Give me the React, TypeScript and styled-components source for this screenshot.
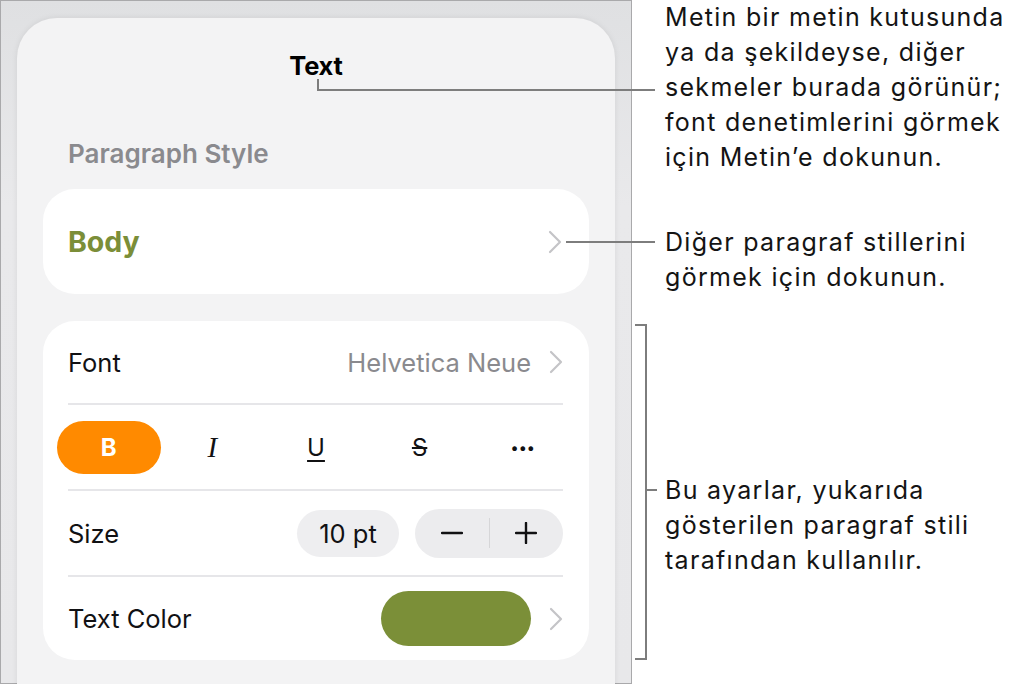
import React from 'react'
import styled, { createGlobalStyle } from 'styled-components'

const GlobalStyle = createGlobalStyle`
  html, body {
    margin: 0;
    padding: 0;
    background: #ffffff;
  }
  body {
    font-family: Inter, "Noto Sans", "Liberation Sans", sans-serif;
    -webkit-font-smoothing: antialiased;
  }
`

const color = {
  ink: '#111113',
  grey: '#8a8a8e',
  chevron: '#c4c4c7',
  line: '#e6e6e9',
  green: '#7b8e38',
  orange: '#ff8a00',
  callout: '#7d7d7d',
}

const Chevron: React.FC = () => (
  <ChevronIcon viewBox="0 0 14 24" aria-hidden>
    <polyline points="2,2 12,12 2,22" />
  </ChevronIcon>
)

const MinusIcon: React.FC = () => (
  <StepIcon viewBox="0 0 24 24" aria-hidden>
    <line x1="1" y1="12" x2="23" y2="12" />
  </StepIcon>
)

const PlusIcon: React.FC = () => (
  <StepIcon viewBox="0 0 24 24" aria-hidden>
    <line x1="1" y1="12" x2="23" y2="12" />
    <line x1="12" y1="1" x2="12" y2="23" />
  </StepIcon>
)

export default function App() {
  return (
    <Page>
      <GlobalStyle />
      <Frame>
        <Panel>
          <Title>Text</Title>
          <SectionLabel>Paragraph Style</SectionLabel>
          <StyleCard>
            <BodyName>Body</BodyName>
            <Chevron />
          </StyleCard>
          <SettingsCard>
            <Row $height={84}>
              <RowLabel>Font</RowLabel>
              <RowValue>
                <ValueText>Helvetica Neue</ValueText>
                <Chevron />
              </RowValue>
            </Row>
            <StyleButtons>
              <StyleButton $active>B</StyleButton>
              <StyleButton $variant="italic">I</StyleButton>
              <StyleButton $variant="underline">U</StyleButton>
              <StyleButton $variant="strike">S</StyleButton>
              <StyleButton $variant="more">•••</StyleButton>
            </StyleButtons>
            <Row $height={86}>
              <RowLabel>Size</RowLabel>
              <RowValue>
                <SizePill>10 pt</SizePill>
                <Stepper>
                  <StepButton>
                    <MinusIcon />
                  </StepButton>
                  <StepDivider />
                  <StepButton>
                    <PlusIcon />
                  </StepButton>
                </Stepper>
              </RowValue>
            </Row>
            <Row $height={83} $last>
              <RowLabel>Text Color</RowLabel>
              <RowValue>
                <Swatch />
                <Chevron />
              </RowValue>
            </Row>
          </SettingsCard>
        </Panel>
      </Frame>

      <Notes>
        <Note $top={0}>
          Metin bir metin kutusunda
          <br />
          ya da şekildeyse, diğer
          <br />
          sekmeler burada görünür;
          <br />
          font denetimlerini görmek
          <br />
          için Metin’e dokunun.
        </Note>
        <Note $top={50}>
          Diğer paragraf stillerini
          <br />
          görmek için dokunun.
        </Note>
        <Note $top={178}>
          Bu ayarlar, yukarıda
          <br />
          gösterilen paragraf stili
          <br />
          tarafından kullanılır.
        </Note>
      </Notes>

      {/* callout lines drawn over the screenshot */}
      <CalloutStem />
      <CalloutLine $top={89} $left={318} $width={337} />
      <CalloutLine $top={241} $left={566} $width={89} />
      <Bracket />
      <CalloutLine $top={489} $left={645} $width={12} />
    </Page>
  )
}

const Page = styled.div`
  position: relative;
  width: 1016px;
  height: 684px;
  display: flex;
  flex-direction: row;
  align-items: flex-start;
  overflow: hidden;
`

const Frame = styled.div`
  box-sizing: border-box;
  width: 632px;
  height: 684px;
  flex-shrink: 0;
  border: 1px solid #a9a9ab;
  background: linear-gradient(#dfe0e2, #e9e9eb 30%, #e8e8ea);
  padding: 17px 16px 0 16px;
`

const Panel = styled.div`
  box-sizing: border-box;
  height: 700px;
  border-radius: 40px 40px 0 0;
  background: #f3f3f4;
  box-shadow: 0 0 6px rgba(0, 0, 0, 0.08);
  padding: 0 26px 0 26px;
  display: flex;
  flex-direction: column;
`

const Title = styled.div`
  margin-top: 33px;
  line-height: 30px;
  font-size: 25.5px;
  font-weight: 700;
  color: #000;
  text-align: center;
  letter-spacing: -0.2px;
`

const SectionLabel = styled.div`
  margin: 58px 0 0 25px;
  line-height: 30px;
  font-size: 26px;
  font-weight: 600;
  color: ${color.grey};
`

const StyleCard = styled.div`
  margin-top: 20px;
  height: 105px;
  border-radius: 32px;
  background: #ffffff;
  padding: 0 27px 0 25px;
  display: flex;
  align-items: center;
  justify-content: space-between;
`

const BodyName = styled.span`
  font-size: 28.5px;
  font-weight: 700;
  color: ${color.green};
`

const ChevronIcon = styled.svg`
  width: 14px;
  height: 24px;
  flex-shrink: 0;
  fill: none;
  stroke: ${color.chevron};
  stroke-width: 2.2;
  stroke-linecap: round;
  stroke-linejoin: round;
`

const SettingsCard = styled.div`
  margin-top: 27px;
  border-radius: 32px;
  background: #ffffff;
  padding: 0 26px 0 25px;
  display: flex;
  flex-direction: column;
`

const Row = styled.div<{ $height: number; $last?: boolean }>`
  box-sizing: border-box;
  height: ${(p) => p.$height}px;
  display: flex;
  align-items: center;
  justify-content: space-between;
  border-bottom: ${(p) => (p.$last ? 'none' : `2px solid ${color.line}`)};
`

const RowLabel = styled.span`
  font-size: 25.5px;
  color: ${color.ink};
`

const RowValue = styled.div`
  display: flex;
  align-items: center;
  gap: 16px;
`

const ValueText = styled.span`
  font-size: 25.5px;
  color: ${color.grey};
  margin-right: 2px;
`

const StyleButtons = styled.div`
  box-sizing: border-box;
  height: 86px;
  padding-bottom: 2px;
  margin: 0 -12px 0 -11px;
  display: grid;
  grid-template-columns: repeat(5, 1fr);
  align-items: center;
  position: relative;

  &::after {
    content: '';
    position: absolute;
    left: 11px;
    right: 12px;
    bottom: 0;
    height: 2px;
    background: ${color.line};
  }
`

const StyleButton = styled.div<{ $active?: boolean; $variant?: 'italic' | 'underline' | 'strike' | 'more' }>`
  height: 53px;
  border-radius: 27px;
  display: flex;
  align-items: center;
  justify-content: center;
  background: ${(p) => (p.$active ? color.orange : 'transparent')};
  color: ${(p) => (p.$active ? '#ffffff' : color.ink)};
  font-size: ${(p) => (p.$variant === 'more' ? '15px' : p.$variant === 'italic' ? '29px' : '24px')};
  font-weight: ${(p) => (p.$active || p.$variant === 'more' ? 700 : 400)};
  font-style: ${(p) => (p.$variant === 'italic' ? 'italic' : 'normal')};
  font-family: ${(p) =>
    p.$variant === 'italic' ? '"Liberation Serif", serif' : 'Inter, "Liberation Sans", sans-serif'};
  text-decoration: ${(p) =>
    p.$variant === 'underline' ? 'underline' : p.$variant === 'strike' ? 'line-through' : 'none'};
  text-decoration-thickness: 2px;
  text-underline-offset: 4px;
  letter-spacing: ${(p) => (p.$variant === 'more' ? '1px' : '0')};
`

const SizePill = styled.div`
  width: 102px;
  height: 47px;
  border-radius: 24px;
  background: #eeeef0;
  display: flex;
  align-items: center;
  justify-content: center;
  font-size: 25.5px;
  color: ${color.ink};
`

const Stepper = styled.div`
  width: 148px;
  height: 49px;
  border-radius: 25px;
  background: #ececee;
  display: flex;
  align-items: center;
`

const StepButton = styled.div`
  flex: 1;
  display: flex;
  align-items: center;
  justify-content: center;
`

const StepDivider = styled.div`
  width: 1px;
  height: 30px;
  background: #d6d6d8;
`

const StepIcon = styled.svg`
  width: 22px;
  height: 22px;
  stroke: ${color.ink};
  stroke-width: 2.6;
  stroke-linecap: round;
`

const Swatch = styled.div`
  width: 150px;
  height: 55px;
  border-radius: 28px;
  background: #7b8f38;
  margin-right: 2px;
`

const Notes = styled.div`
  padding-left: 33px;
  display: flex;
  flex-direction: column;
`

const Note = styled.p<{ $top: number }>`
  margin: ${(p) => p.$top}px 0 0 0;
  font-size: 25px;
  line-height: 35px;
  color: #141414;
  letter-spacing: 1.3px;
`

const CalloutStem = styled.div`
  position: absolute;
  left: 317px;
  top: 79px;
  width: 2px;
  height: 12px;
  background: ${color.callout};
`

const CalloutLine = styled.div<{ $top: number; $left: number; $width: number }>`
  position: absolute;
  top: ${(p) => p.$top}px;
  left: ${(p) => p.$left}px;
  width: ${(p) => p.$width}px;
  height: 2px;
  background: ${color.callout};
`

const Bracket = styled.div`
  position: absolute;
  left: 635px;
  top: 324px;
  width: 10px;
  height: 332px;
  border: 2px solid ${color.callout};
  border-left: none;
`
